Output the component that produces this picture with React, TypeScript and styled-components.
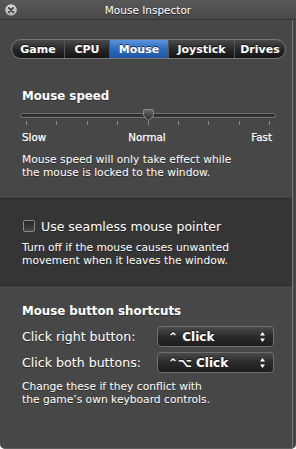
import * as React from "react";
import styled, { createGlobalStyle } from "styled-components";

const GlobalStyle = createGlobalStyle`
  html, body {
    margin: 0;
    padding: 0;
    background: #ffffff;
  }
  body {
    font-family: "Lucida Grande", "DejaVu Sans", sans-serif;
    color: #ffffff;
  }
`;

const Window = styled.div`
  width: 296px;
  height: 449px;
  display: flex;
  flex-direction: column;
  background: #474747;
  border-radius: 0 0 5px 5px;
  overflow: hidden;
  box-sizing: border-box;
  border-bottom: 1px solid #5e5e5e;
`;

const TitleBar = styled.div`
  height: 20px;
  flex: none;
  box-sizing: border-box;
  display: flex;
  align-items: center;
  justify-content: center;
  position: relative;
  background: linear-gradient(#575757, #4a4a4a);
  border-bottom: 1px solid #303030;
  font-size: 10.5px;
  text-shadow: 0 1px 0 rgba(0, 0, 0, 0.6);
`;

const CloseButton = styled.div`
  position: absolute;
  left: 5px;
  top: 4px;
  width: 12px;
  height: 12px;
  display: flex;
`;

const Body = styled.div`
  flex: 1;
  display: flex;
  flex-direction: column;
  border-right: 1px solid #7a7a7a;
  margin-right: 3px;
`;

const Section = styled.div<{ $dark?: boolean; $pad: string }>`
  padding: ${(p) => p.$pad};
  background: ${(p) => (p.$dark ? "#353535" : "#474747")};
  ${(p) =>
    p.$dark &&
    `
    border-top: 1px solid #2a2a2a;
    border-bottom: 1px solid #2a2a2a;
  `}
`;

const Tabs = styled.div`
  margin-left: 11px;
  width: 275px;
  height: 20px;
  box-sizing: border-box;
  display: flex;
  border: 1px solid #777;
  border-radius: 10px;
  overflow: hidden;
  background: linear-gradient(#4a4a4a, #262626 55%, #141414);
`;

const Tab = styled.div<{ $w: number; $active?: boolean }>`
  width: ${(p) => p.$w}px;
  flex: none;
  box-sizing: border-box;
  display: flex;
  align-items: center;
  justify-content: center;
  font-size: 11px;
  font-weight: bold;
  text-shadow: 0 -1px 0 rgba(0, 0, 0, 0.6);
  border-left: 1px solid #555;
  background: ${(p) =>
    p.$active ? "linear-gradient(#5c95dc, #2e6bbd 50%, #1f56a3)" : "transparent"};
  &:first-child {
    border-left: none;
  }
`;

const Heading = styled.div<{ $mt?: number }>`
  margin: ${(p) => p.$mt ?? 0}px 0 0 22px;
  font-size: 11.8px;
  font-weight: bold;
  line-height: 16px;
  text-shadow: 0 1px 0 rgba(0, 0, 0, 0.4);
`;

const SliderArea = styled.div`
  margin: 5px 0 0 20px;
  width: 256px;
  height: 17px;
  position: relative;
`;

const Track = styled.div`
  position: absolute;
  left: 0;
  right: 0;
  top: 4px;
  height: 5px;
  box-sizing: border-box;
  border: 1px solid #727272;
  border-radius: 3px;
  background: linear-gradient(#252525, #3a3a3a);
`;

const Ticks = styled.div`
  position: absolute;
  left: 6px;
  right: 6px;
  top: 12px;
  display: flex;
  justify-content: space-between;
`;

const Tick = styled.div`
  width: 1px;
  height: 4px;
  background: #8c8c8c;
`;

const Thumb = styled.svg`
  position: absolute;
  left: 123px;
  top: 0;
`;

const SliderLabels = styled.div`
  margin: 5px 20px 0 22px;
  display: grid;
  grid-template-columns: 1fr auto 1fr;
  font-size: 10.3px;
  line-height: 13px;
  -webkit-text-stroke: 0.25px #fff;
  text-shadow: 0 1px 0 rgba(0, 0, 0, 0.4);
  span:last-child {
    text-align: right;
  }
`;

const Note = styled.div<{ $mt: number }>`
  margin: ${(p) => p.$mt}px 0 0 22px;
  font-size: 10.7px;
  line-height: 13px;
  text-shadow: 0 1px 0 rgba(0, 0, 0, 0.4);
`;

const CheckRow = styled.label`
  margin-left: 23px;
  display: flex;
  align-items: center;
  gap: 6px;
  height: 16px;
  font-size: 12.5px;
  text-shadow: 0 1px 0 rgba(0, 0, 0, 0.4);
`;

const CheckBox = styled.span`
  width: 12px;
  height: 12px;
  box-sizing: border-box;
  border: 1px solid #8a8a8a;
  border-radius: 2px;
  background: linear-gradient(#232323, #484848);
`;

const Shortcuts = styled.div`
  margin: 7px 0 0 22px;
  display: grid;
  grid-template-columns: 135px 117px;
  row-gap: 5px;
  align-items: center;
`;

const RowLabel = styled.div`
  font-size: 12.6px;
  text-shadow: 0 1px 0 rgba(0, 0, 0, 0.4);
`;

const Popup = styled.div`
  height: 21px;
  box-sizing: border-box;
  display: flex;
  align-items: center;
  justify-content: space-between;
  padding: 0 7px 0 10px;
  border: 1px solid #6e6e6e;
  border-radius: 4px;
  background: linear-gradient(#4a4a4a, #2a2a2a 50%, #1c1c1c);
  font-size: 12px;
  font-weight: bold;
  text-shadow: 0 -1px 0 rgba(0, 0, 0, 0.6);
`;

const tabs = [
  { name: "Game", w: 52 },
  { name: "CPU", w: 45 },
  { name: "Mouse", w: 59, active: true },
  { name: "Joystick", w: 66 },
  { name: "Drives", w: 51 },
];

const Arrows = () => (
  <svg width="7" height="12" viewBox="0 0 7 12">
    <path d="M3.5 1 L6 4.5 H1 Z" fill="#fff" />
    <path d="M3.5 11 L6 7.5 H1 Z" fill="#fff" />
  </svg>
);

const App: React.FC = () => {
  return (
    <>
      <GlobalStyle />
      <Window>
        <TitleBar>
          <CloseButton>
            <svg width="12" height="12" viewBox="0 0 12 12">
              <defs>
                <linearGradient id="cb" x1="0" y1="0" x2="0" y2="1">
                  <stop offset="0" stopColor="#dcdcdc" />
                  <stop offset="1" stopColor="#a9a9a9" />
                </linearGradient>
              </defs>
              <circle cx="6" cy="6" r="5.8" fill="url(#cb)" />
              <path
                d="M3.8 3.8 L8.2 8.2 M8.2 3.8 L3.8 8.2"
                stroke="#3c3c3c"
                strokeWidth="1.7"
                strokeLinecap="round"
              />
            </svg>
          </CloseButton>
          Mouse Inspector
        </TitleBar>
        <Body>
          <Section $pad="19px 0 19px 0">
            <Tabs>
              {tabs.map((t) => (
                <Tab key={t.name} $w={t.w} $active={t.active}>
                  {t.name}
                </Tab>
              ))}
            </Tabs>
            <Heading $mt={29}>Mouse speed</Heading>
            <SliderArea>
              <Track />
              <Ticks>
                {Array.from({ length: 9 }).map((_, i) => (
                  <Tick key={i} />
                ))}
              </Ticks>
              <Thumb width="11" height="12" viewBox="0 0 11 12">
                <defs>
                  <linearGradient id="th" x1="0" y1="0" x2="0" y2="1">
                    <stop offset="0" stopColor="#6a6a6a" />
                    <stop offset="1" stopColor="#262626" />
                  </linearGradient>
                </defs>
                <path
                  d="M2 0.5 H9 Q10.5 0.5 10.5 2 V6.5 L5.5 11.5 L0.5 6.5 V2 Q0.5 0.5 2 0.5 Z"
                  fill="url(#th)"
                  stroke="#8a8a8a"
                />
              </Thumb>
            </SliderArea>
            <SliderLabels>
              <span>Slow</span>
              <span>Normal</span>
              <span>Fast</span>
            </SliderLabels>
            <Note $mt={9}>
              Mouse speed will only take effect while
              <br />
              the mouse is locked to the window.
            </Note>
          </Section>
          <Section $dark $pad="19px 0 18px 0">
            <CheckRow>
              <CheckBox />
              Use seamless mouse pointer
            </CheckRow>
            <Note $mt={7}>
              Turn off if the mouse causes unwanted
              <br />
              movement when it leaves the window.
            </Note>
          </Section>
          <Section $pad="17px 0 0 0">
            <Heading>Mouse button shortcuts</Heading>
            <Shortcuts>
              <RowLabel>Click right button:</RowLabel>
              <Popup>
                <span>⌃ Click</span>
                <Arrows />
              </Popup>
              <RowLabel>Click both buttons:</RowLabel>
              <Popup>
                <span>⌃⌥ Click</span>
                <Arrows />
              </Popup>
            </Shortcuts>
            <Note $mt={7}>
              Change these if they conflict with
              <br />
              the game’s own keyboard controls.
            </Note>
          </Section>
        </Body>
      </Window>
    </>
  );
};

export default App;
